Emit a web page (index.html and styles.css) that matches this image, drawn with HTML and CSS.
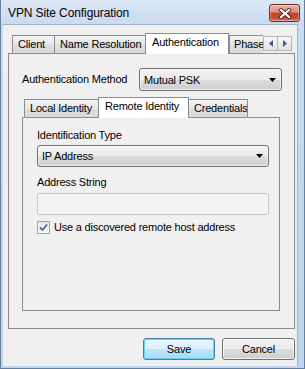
FILE: index.html
```html
<!DOCTYPE html>
<html>
<head>
<meta charset="utf-8">
<link rel="stylesheet" href="styles.css">
</head>
<body>
<div class="window">
  <div class="titlebar">
    <span class="title">VPN Site Configuration</span>
    <div class="close">
      <svg width="14" height="11" viewBox="0 0 14 11">
        <path d="M3 2 L11 9 M11 2 L3 9" stroke="#4a2a24" stroke-width="4" stroke-linecap="square"/>
        <path d="M3 2 L11 9 M11 2 L3 9" stroke="#ffffff" stroke-width="2.2" stroke-linecap="square"/>
      </svg>
    </div>
  </div>
  <div class="client">
    <div class="strip outer-strip">
      <div class="tab t-client">Client</div>
      <div class="tab t-name">Name Resolution</div>
      <div class="tab sel t-auth">Authentication</div>
      <div class="tab t-phase">Phase</div>
      <div class="scroller">
        <div class="sbtn"><svg width="4" height="7" viewBox="0 0 4 7"><path d="M4 0 L0 3.5 L4 7Z" fill="#3b5a9a"/></svg></div>
        <div class="sbtn"><svg width="4" height="7" viewBox="0 0 4 7"><path d="M0 0 L4 3.5 L0 7Z" fill="#3b5a9a"/></svg></div>
      </div>
    </div>
    <div class="panel outer-panel">
      <div class="row">
        <span class="lbl">Authentication Method</span>
        <div class="combo c-method"><span>Mutual PSK</span><svg class="arrow" width="7" height="4" viewBox="0 0 7 4"><path d="M0 0 H7 L3.5 4Z" fill="#000"/></svg></div>
      </div>
      <div class="inner">
        <div class="strip inner-strip">
          <div class="tab t-local">Local Identity</div>
          <div class="tab sel t-remote">Remote Identity</div>
          <div class="tab t-cred">Credentials</div>
        </div>
        <div class="panel inner-panel">
          <div class="lbl field-lbl">Identification Type</div>
          <div class="combo c-type"><span>IP Address</span><svg class="arrow" width="7" height="4" viewBox="0 0 7 4"><path d="M0 0 H7 L3.5 4Z" fill="#000"/></svg></div>
          <div class="lbl field-lbl l-addr">Address String</div>
          <div class="textbox"></div>
          <div class="check-row">
            <div class="checkbox"><svg width="9" height="9" viewBox="0 0 9 9"><path d="M1 4.5 L3.5 7 L8 1.5" stroke="#4d67a8" stroke-width="1.8" fill="none"/></svg></div>
            <span class="lbl">Use a discovered remote host address</span>
          </div>
        </div>
      </div>
    </div>
    <div class="buttons">
      <div class="btn default">Save</div>
      <div class="btn">Cancel</div>
    </div>
  </div>
</div>
</body>
</html>
```
FILE: styles.css
```css
* { box-sizing: border-box; }
html, body { margin: 0; padding: 0; }
body {
  font-family: "Liberation Sans", Arial, sans-serif;
  font-size: 11px;
  letter-spacing: -0.2px;
  color: #000;
  background: #c3d6ec;
}
.window {
  width: 305px;
  height: 369px;
  display: flex;
  flex-direction: column;
  background: linear-gradient(#dbe7f5 0px, #c9dbf0 24px, #bfd4ec 100%);
  border-left: 1px solid #66809f;
  border-right: 1px solid #66809f;
  border-bottom: 1px solid #66809f;
  padding: 0 6px 2px 2px;
}
.titlebar {
  height: 24px;
  flex: none;
  display: flex;
  align-items: flex-start;
  justify-content: space-between;
  padding-left: 5px;
}
.title {
  font-size: 12px;
  letter-spacing: -0.1px;
  line-height: 14px;
  margin-top: 6px;
}
.close {
  width: 31px;
  height: 18px;
  margin-top: 4px;
  margin-right: -2px;
  border: 1px solid #6f2b20;
  border-radius: 3px;
  background: linear-gradient(#eab2a5 0%, #db8d7a 45%, #c6422a 50%, #c84a32 80%, #de7a5c 100%);
  box-shadow: inset 0 0 0 1px rgba(255,255,255,0.35);
  display: flex;
  align-items: center;
  justify-content: center;
}
.client {
  flex: 1;
  background: #f0f0f0;
  border-top: 1px solid #9fb3cc;
  border-right: 1px solid #9fb3cc;
  padding: 8px 1px 0 5px;
  display: flex;
  flex-direction: column;
}
.strip {
  display: flex;
  align-items: flex-end;
  flex: none;
}
.outer-strip { height: 20px; padding-left: 4px; }
.tab {
  height: 18px;
  border: 1px solid #898c95;
  border-bottom: none;
  background: linear-gradient(#f3f3f3, #e6e6e6 50%, #dcdcdc 51%, #dadada);
  padding-left: 5px;
  line-height: 16px;
  white-space: nowrap;
  overflow: hidden;
  margin-left: -1px;
  flex: none;
}
.tab.sel {
  height: 21px;
  margin-bottom: -1px;
  background: #ffffff;
  position: relative;
  z-index: 2;
  line-height: 16px;
  padding-left: 6px;
}
.t-client { width: 43px; margin-left: 0; }
.t-name { width: 92px; }
.t-auth { width: 84px; }
.t-phase { width: 34px; border-right: none; margin-left: 0; padding-left: 4px; }
.scroller {
  display: flex;
  align-self: flex-start;
  margin-top: 3px;
  margin-left: 0;
}
.sbtn {
  width: 15px;
  height: 15px;
  border: 1px solid #b5b5b5;
  background: linear-gradient(#f7f7f7, #e2e2e2);
  display: flex;
  align-items: center;
  justify-content: center;
  margin-right: -1px;
}
.panel {
  border: 1px solid #898c95;
  background: #f0f0f0;
}
.outer-panel {
  width: 287px;
  height: 276px;
  padding: 14px 12px 17px 13px;
  display: flex;
  flex-direction: column;
}
.row {
  display: flex;
  align-items: center;
  justify-content: space-between;
  height: 23px;
}
.lbl { line-height: 13px; white-space: nowrap; }
.combo {
  height: 23px;
  border: 1px solid #707070;
  border-radius: 3px;
  background: linear-gradient(#f2f2f2 0%, #ebebeb 50%, #dddddd 51%, #cfcfcf 100%);
  box-shadow: inset 0 0 0 1px rgba(255,255,255,0.6);
  display: flex;
  align-items: center;
  justify-content: space-between;
  padding: 0 4px 0 4px;
}
.c-method { width: 143px; }
.arrow { margin-right: 1px; }
.inner {
  flex: 1;
  display: flex;
  flex-direction: column;
  margin-top: 6px;
  margin-right: 2px;
}
.inner-strip { height: 20px; padding-left: 2px; }
.t-local { width: 75px; margin-left: 0; }
.t-remote { width: 91px; }
.t-cred { width: 60px; }
.inner-panel {
  flex: 1;
  padding: 11px 10px 0 14px;
  display: flex;
  flex-direction: column;
}
.field-lbl { margin-bottom: 3px; }
.c-type { width: 232px; height: 22px; }
.l-addr { margin-top: 9px; margin-bottom: 4px; }
.textbox {
  width: 232px;
  height: 22px;
  border: 1px solid #c5c8cc;
  border-radius: 2px;
  background: #f4f4f4;
}
.check-row {
  display: flex;
  align-items: center;
  margin-top: 6px;
}
.checkbox {
  width: 13px;
  height: 13px;
  border: 1px solid #a4a4a4;
  background: linear-gradient(#e6e6e6, #f8f8f8);
  display: flex;
  align-items: center;
  justify-content: center;
  margin-right: 4px;
}
.buttons {
  display: flex;
  justify-content: flex-end;
  gap: 7px;
  margin-top: 9px;
  padding-right: 1px;
}
.btn {
  width: 73px;
  height: 22px;
  border: 1px solid #707070;
  border-radius: 3px;
  background: linear-gradient(#f2f2f2 0%, #ebebeb 50%, #dddddd 51%, #cfcfcf 100%);
  box-shadow: inset 0 0 0 1px rgba(255,255,255,0.7);
  display: flex;
  align-items: center;
  justify-content: center;
  line-height: 13px;
}
.btn.default {
  width: 72px;
  border-color: #3c7fb1;
  background: linear-gradient(#eaf6fd 0%, #d9f0fc 50%, #bee6fd 51%, #a7d9f5 100%);
  box-shadow: inset 0 0 0 1px #6fd0f5;
}
```
